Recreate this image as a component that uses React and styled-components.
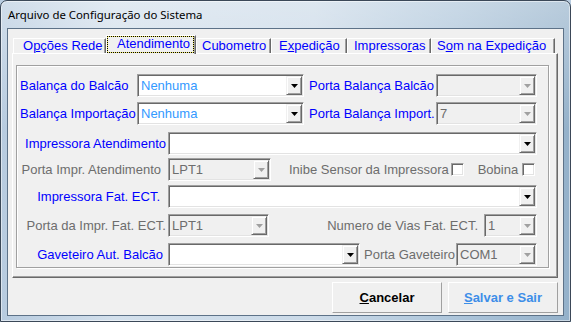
import React from 'react';
import styled, { createGlobalStyle } from 'styled-components';

const FONT = '"Liberation Sans", Arial, sans-serif';
const BLUE = '#0000ff';
const MUTED = '#6d6d6d';

const GlobalStyle = createGlobalStyle`
  html, body { margin: 0; padding: 0; background: #b9cde1; }
  * { box-sizing: border-box; }
`;

const Frame = styled.div`
  width: 571px;
  height: 322px;
  display: flex;
  flex-direction: column;
  padding: 0 6px 5px;
  border: 1px solid #3b4858;
  border-radius: 7px 7px 0 0;
  background:
    linear-gradient(180deg, rgba(255,255,255,.35) 0%, rgba(255,255,255,0) 40%),
    linear-gradient(90deg, #b7cbdf 0%, #d3e0ec 20%, #cbdae8 55%, #adc5da 80%, #94b1ca 100%);
  box-shadow: inset 0 0 0 1px rgba(255,255,255,.5);
  overflow: hidden;
`;

const TitleBar = styled.div`
  height: 27px;
  display: flex;
  align-items: center;
  padding-left: 1px;
  font-family: "Noto Sans", "Open Sans", sans-serif;
  font-size: 11.4px;
  color: #000;
`;

const Client = styled.div`
  flex: 1;
  display: flex;
  flex-direction: column;
  padding: 6px 5px 2px 4px;
  background: #f0f0f0;
  border: 1px solid #5d7288;
  font-family: ${FONT};
  font-size: 13px;
`;

const TabStrip = styled.div`
  height: 18px;
  display: flex;
  align-items: flex-end;
  padding-left: 1px;
`;

const Tab = styled.div`
  position: relative;
  flex-shrink: 0;
  width: ${p => p.w}px;
  height: ${p => (p.active ? 19 : 15)}px;
  margin-bottom: ${p => (p.active ? -1 : 0)}px;
  z-index: ${p => (p.active ? 1 : 0)};
  padding: ${p => (p.active ? 1 : 0)}px 0 0 ${p => p.pl}px;
  border-left: 1px solid #fff;
  border-top: 1px solid #fff;
  border-right: 1px solid #696969;
  box-shadow: inset -1px 0 #a0a0a0;
  background: #f0f0f0;
  color: ${BLUE};
  line-height: 14px;
  white-space: nowrap;

  ${p => p.active && `
    &::before, &::after {
      content: '';
      position: absolute;
      inset: 0 1px 1px 0;
    }
    &::before { border: 1px solid #f3ec6a; }
    &::after { border: 1px dotted #000; }
  `}
`;

const Panel = styled.div`
  flex: 1;
  display: flex;
  padding: 11px 8px 9px 3px;
  border-top: 1px solid #fff;
  border-left: 1px solid #fff;
  border-right: 1px solid #696969;
  border-bottom: 1px solid #696969;
  box-shadow: inset -1px -1px #a0a0a0;
`;

const Group = styled.div`
  flex: 1;
  display: flex;
  flex-direction: column;
  padding: 0 11px 0 3px;
  border: 1px solid #a0a0a0;
  box-shadow: inset 1px 1px #fff, 1px 1px #fff;
`;

const Row = styled.div`
  display: flex;
  align-items: center;
  height: 23px;
  margin-top: ${p => p.mt}px;
`;

const Label = styled.span`
  flex-shrink: 0;
  width: ${p => (p.w ? `${p.w}px` : 'auto')};
  margin-left: ${p => p.ml || 0}px;
  padding-right: ${p => p.pr || 0}px;
  text-align: ${p => p.align || 'left'};
  color: ${p => (p.muted ? MUTED : BLUE)};
  white-space: nowrap;
`;

const Spacer = styled.div`
  flex: 1;
`;

const ComboBox = styled.div`
  flex: ${p => (p.grow ? 1 : '0 0 auto')};
  width: ${p => (p.w ? `${p.w}px` : 'auto')};
  margin-left: ${p => p.ml || 0}px;
  height: 23px;
  display: flex;
  padding: 1px;
  border: 1px solid;
  border-color: #a0a0a0 #fff #fff #a0a0a0;
  box-shadow: inset 1px 1px #696969, inset -1px -1px #e3e3e3;
  background: ${p => (p.disabled ? '#f0f0f0' : '#fff')};
`;

const ComboValue = styled.div`
  flex: 1;
  padding-left: 2px;
  line-height: 19px;
  color: ${p => (p.disabled ? MUTED : '#3399ff')};
  white-space: nowrap;
  overflow: hidden;
`;

const DropButton = styled.div`
  width: 16px;
  height: 19px;
  display: flex;
  align-items: center;
  justify-content: center;
  background: #f0f0f0;
  border: 1px solid;
  border-color: #f0f0f0 #696969 #696969 #f0f0f0;
  box-shadow: inset 1px 1px #fff, inset -1px -1px #a0a0a0;
`;

const CheckBox = styled.div`
  flex-shrink: 0;
  width: 13px;
  height: 13px;
  margin-left: ${p => p.ml || 0}px;
  border: 1px solid;
  border-color: #a0a0a0 #fff #fff #a0a0a0;
  box-shadow: inset 1px 1px #696969, inset -1px -1px #e3e3e3;
  background: #fff;
`;

const Footer = styled.div`
  height: 31px;
  margin-top: 4px;
  display: flex;
  justify-content: flex-end;
  gap: 6px;
`;

const Button = styled.div`
  width: 110px;
  height: 31px;
  display: flex;
  align-items: center;
  justify-content: center;
  border: 1px solid;
  border-color: #fff #a0a0a0 #a0a0a0 #fff;
  background: #f0f0f0;
  font-weight: bold;
  color: ${p => p.color || '#000'};
`;

const Arrow = ({ disabled }) => (
  <svg width="7" height="4" viewBox="0 0 7 4">
    <polygon points="0,0 7,0 3.5,4" fill={disabled ? '#a0a0a0' : '#000'} />
  </svg>
);

const Combo = ({ value = '', disabled, w, grow, ml }) => (
  <ComboBox disabled={disabled} w={w} grow={grow} ml={ml}>
    <ComboValue disabled={disabled}>{value}</ComboValue>
    <DropButton>
      <Arrow disabled={disabled} />
    </DropButton>
  </ComboBox>
);

const tabs = [
  { key: 'rede', w: 93, pl: 9, label: <>O<u>p</u>ções Rede</> },
  { key: 'atend', w: 90, pl: 10, label: 'Atendimento', active: true },
  { key: 'cubo', w: 75, pl: 5, label: 'Cubometro' },
  { key: 'exped', w: 76, pl: 7, label: <>E<u>x</u>pedição</> },
  { key: 'impr', w: 84, pl: 6, label: <>Impresso<u>r</u>as</> },
  { key: 'som', w: 124, pl: 5, label: <>S<u>o</u>m na Expedição</> },
];

const App = () => (
  <>
    <GlobalStyle />
    <Frame>
      <TitleBar>Arquivo de Configuração do Sistema</TitleBar>
      <Client>
        <TabStrip>
          {tabs.map(t => (
            <Tab key={t.key} w={t.w} pl={t.pl} active={t.active}>{t.label}</Tab>
          ))}
        </TabStrip>
        <Panel>
          <Group>
            <Row mt={8}>
              <Label w={117}>Balança do Balcão</Label>
              <Combo w={167} value="Nenhuma" />
              <Label w={127} ml={5}>Porta Balança Balcão</Label>
              <Combo w={101} disabled />
            </Row>
            <Row mt={5}>
              <Label w={117}>Balança Importação</Label>
              <Combo w={167} value="Nenhuma" />
              <Label w={127} ml={5}>Porta Balança Import.</Label>
              <Combo w={101} disabled value="7" />
            </Row>
            <Row mt={7}>
              <Label w={148} pr={2} align="right">Impressora Atendimento</Label>
              <Combo grow />
            </Row>
            <Row mt={3}>
              <Label w={148} pr={7} align="right" muted>Porta Impr. Atendimento</Label>
              <Combo w={103} disabled value="LPT1" />
              <Label ml={18} muted>Inibe Sensor da Impressora</Label>
              <CheckBox ml={2} />
              <Label ml={14} muted>Bobina</Label>
              <CheckBox ml={4} />
            </Row>
            <Row mt={4}>
              <Label w={148} pr={8} align="right">Impressora Fat. ECT.</Label>
              <Combo grow />
            </Row>
            <Row mt={6}>
              <Label w={148} pr={2} align="right" muted>Porta da Impr. Fat. ECT.</Label>
              <Combo w={101} disabled value="LPT1" />
              <Spacer />
              <Label muted>Numero de Vias Fat. ECT.</Label>
              <Combo w={53} ml={6} disabled value="1" />
            </Row>
            <Row mt={6}>
              <Label w={148} pr={5} align="right">Gaveteiro Aut. Balcão</Label>
              <Combo w={192} />
              <Label ml={4} muted>Porta Gaveteiro</Label>
              <Spacer />
              <Combo w={81} disabled value="COM1" />
            </Row>
          </Group>
        </Panel>
        <Footer>
          <Button><span><u>C</u>ancelar</span></Button>
          <Button color="#3d8ee8"><span><u>S</u>alvar e Sair</span></Button>
        </Footer>
      </Client>
    </Frame>
  </>
);

export default App;
